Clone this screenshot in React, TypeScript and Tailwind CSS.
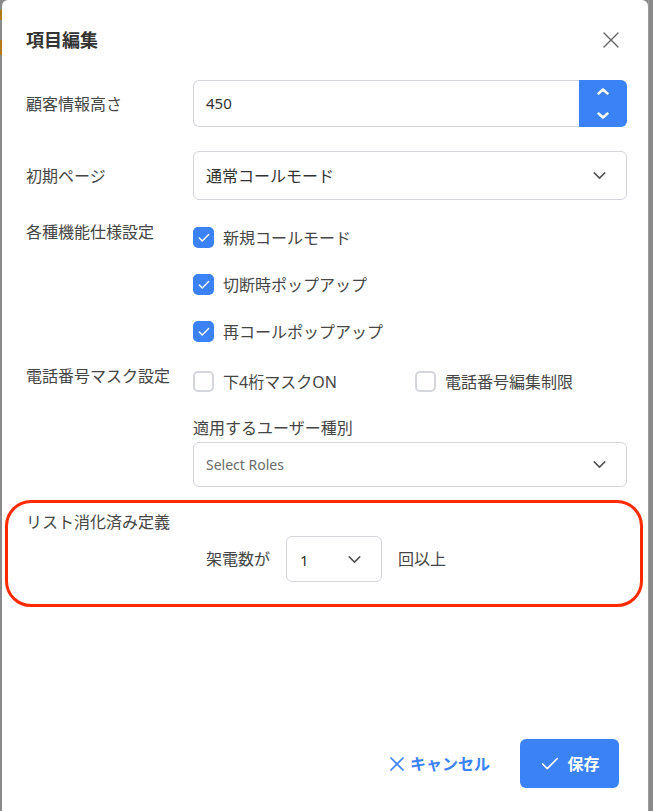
import { Check, ChevronDown, X } from 'lucide-react'

const font = { fontFamily: '"Noto Sans", "Noto Sans CJK JP", sans-serif' }

function CheckBox({ checked, label }: { checked: boolean; label: string }) {
  return (
    <div className="flex h-[21px] items-center gap-[9px]">
      {checked ? (
        <span className="flex h-[21px] w-[21px] items-center justify-center rounded-[5px] bg-[#3b82f6]">
          <Check className="h-[14px] w-[14px] text-white" strokeWidth={2.5} />
        </span>
      ) : (
        <span className="h-[21px] w-[21px] rounded-[5px] border-2 border-[#d4d6db] bg-white" />
      )}
      <span className="text-[16px] leading-6 text-[#454545]">{label}</span>
    </div>
  )
}

function Caret({ up }: { up?: boolean }) {
  return (
    <svg width="12" height="7" viewBox="0 0 12 7" fill="none">
      <path
        d={up ? 'M1.5 5.5 L6 1.5 L10.5 5.5' : 'M1.5 1.5 L6 5.5 L10.5 1.5'}
        stroke="white"
        strokeWidth="2.4"
        strokeLinecap="round"
        strokeLinejoin="round"
      />
    </svg>
  )
}

export default function App() {
  return (
    <div className="flex h-[811px] w-[653px] overflow-hidden bg-[#8a8a8a]" style={font}>
      <div className="flex w-[2px] flex-col">
        <div className="h-[10px] bg-[#8a8a8a]" />
        <div className="h-[10px] bg-[#b07a1a]" />
        <div className="h-[20px] bg-[#8a8a8a]" />
        <div className="h-[15px] bg-[#b07a1a]" />
      </div>
      <div className="w-[646px] rounded-t-[6px] bg-white pl-[24px] pr-[21px]">
        {/* header */}
        <div className="mt-[28px] flex h-[24px] items-center justify-between">
          <h2 className="text-[18px] font-bold leading-6 text-[#333]">項目編集</h2>
          <X className="mr-[2px] h-[28px] w-[28px] text-[#666]" strokeWidth={1.2} />
        </div>

        <div className="mt-[28px] flex h-[47px] items-center">
          <div className="w-[167px] text-[16px] text-[#454545]">顧客情報高さ</div>
          <div className="flex h-full flex-1">
            <div className="flex flex-1 items-center rounded-l-[6px] border border-r-0 border-[#d4d6db] px-[12px] text-[15px] text-[#333]">
              450
            </div>
            <div className="flex w-[48px] flex-col items-center justify-center gap-[17px] rounded-r-[6px] bg-[#3b82f6]">
              <Caret up />
              <Caret />
            </div>
          </div>
        </div>

        <div className="mt-[24px] flex h-[49px] items-center">
          <div className="w-[167px] text-[16px] text-[#454545]">初期ページ</div>
          <div className="flex h-full flex-1 items-center justify-between rounded-[6px] border border-[#d4d6db] pl-[12px] pr-[16px]">
            <span className="text-[16px] text-[#333]">通常コールモード</span>
            <ChevronDown className="h-[21px] w-[21px] text-[#555]" strokeWidth={1.8} />
          </div>
        </div>

        <div className="mt-[20px] flex">
          <div className="w-[167px] text-[16px] leading-6 text-[#454545]">各種機能仕様設定</div>
          <div className="flex flex-col gap-[26px] pt-[7px]">
            <CheckBox checked label="新規コールモード" />
            <CheckBox checked label="切断時ポップアップ" />
            <CheckBox checked label="再コールポップアップ" />
          </div>
        </div>

        <div className="mt-[22px] flex">
          <div className="w-[167px] text-[16px] leading-6 text-[#454545]">電話番号マスク設定</div>
          <div className="flex pt-[7px]">
            <div className="w-[222px]">
              <CheckBox checked={false} label="下4桁マスクON" />
            </div>
            <CheckBox checked={false} label="電話番号編集制限" />
          </div>
        </div>

        <div className="ml-[167px] mt-[24px]">
          <div className="text-[16px] leading-6 text-[#454545]">適用するユーザー種別</div>
          <div className="mt-[2px] flex h-[45px] items-center justify-between rounded-[6px] border border-[#d4d6db] pl-[12px] pr-[16px]">
            <span className="text-[14px] text-[#6b6b6b]">Select Roles</span>
            <ChevronDown className="h-[21px] w-[21px] text-[#555]" strokeWidth={1.8} />
          </div>
        </div>

        <div className="-ml-[21px] -mr-[16px] mt-[13px] rounded-[26px] border-[3px] border-[#ff2a00] pb-[22px] pl-[18px] pt-[7px]">
          <div className="text-[16px] leading-6 text-[#454545]">リスト消化済み定義</div>
          <div className="ml-[180px] mt-[2px] flex items-center">
            <span className="text-[16px] text-[#454545]">架電数が</span>
            <div className="ml-[16px] flex h-[46px] w-[96px] items-center justify-between rounded-[6px] border border-[#d4d6db] pl-[13px] pr-[16px]">
              <span className="pt-[3px] text-[15px] text-[#333]">1</span>
              <ChevronDown className="h-[21px] w-[21px] text-[#555]" strokeWidth={1.8} />
            </div>
            <span className="ml-[16px] text-[16px] text-[#454545]">回以上</span>
          </div>
        </div>

        <div className="mr-[8px] mt-[132px] flex items-center justify-end gap-[26px]">
          <button className="flex items-center gap-[1px] px-[4px] text-[16px] font-bold text-[#3b82f6]">
            <X className="h-[24px] w-[24px]" strokeWidth={1.7} />
            キャンセル
          </button>
          <button className="flex h-[49px] w-[99px] items-center justify-center gap-[6px] rounded-[6px] bg-[#3b82f6] text-[16px] font-bold text-white">
            <Check className="h-[22px] w-[22px]" strokeWidth={1.8} />
            保存
          </button>
        </div>
      </div>
      <div className="w-[1px] bg-[#9a9a9a]" />
    </div>
  )
}
